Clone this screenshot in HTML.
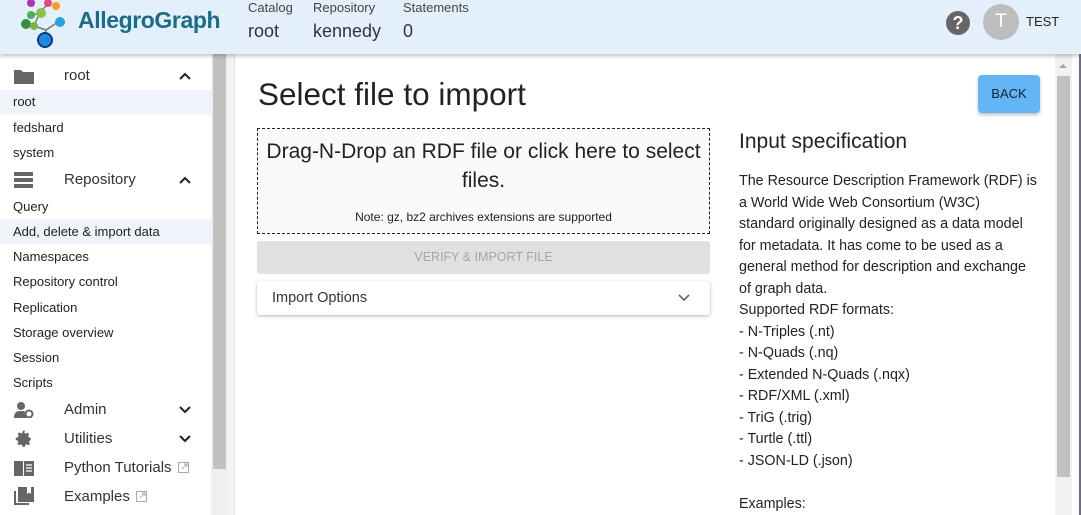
<!DOCTYPE html>
<html><head><meta charset="utf-8"><style>
*{box-sizing:border-box;margin:0;padding:0}
body{width:1081px;height:515px;overflow:hidden;font-family:"Liberation Sans",Roboto,sans-serif;background:#fff;position:relative;color:#222}
.hdr{position:absolute;left:0;top:0;width:1081px;height:54px;background:#e3f0fb;box-shadow:0 2px 4px rgba(0,0,0,.25);z-index:5}
.logo{position:absolute;left:78px;top:7px;font-size:23px;font-weight:bold;color:#1b6c86;letter-spacing:-.4px}
.hk{position:absolute;top:0;font-size:13px;color:#444}
.hv{position:absolute;top:21px;font-size:18px;color:#333}
.side{position:absolute;left:0;top:54px;width:211px;height:461px;background:#fff}
.it{position:absolute;left:13px;font-size:13px;color:#222}
.hi{position:absolute;left:0;width:211px;height:25px;background:#eef4fa}
.sec{position:absolute;left:64px;font-size:15px;color:#333}
.ic{position:absolute;left:14px}
.car{position:absolute;left:179px}
.sb{position:absolute;left:211px;top:54px;width:17px;height:461px;background:#efefef}
.sbt{position:absolute;left:213px;top:54px;width:13px;height:415px;background:#c1c1c1}
.bd{position:absolute;left:228px;top:54px;width:7px;height:461px;background:#f4f4f4;border-right:1px solid #e2e2e2}
h1{position:absolute;left:258px;top:76px;font-size:31.5px;font-weight:normal;color:#222}
.back{position:absolute;left:978px;top:75px;width:62px;height:38px;background:#64b5f6;border-radius:4px;box-shadow:0 2px 3px rgba(0,0,0,.25);font-size:13px;color:#123;text-align:center;line-height:38px}
.drop{position:absolute;left:257px;top:128px;width:453px;height:106px;border:1px dashed #222;background:#fafafa;text-align:center}
.vbtn{position:absolute;left:257px;top:241px;width:453px;height:33px;background:#e0e0e0;border-radius:3px;color:#a6a6a6;font-size:12.5px;text-align:center;line-height:33px}
.opt{position:absolute;left:257px;top:281px;width:453px;height:34px;background:#fff;box-shadow:0 1px 3px rgba(0,0,0,.3);border-radius:3px;font-size:14.5px;color:#333;padding:9px 15px}
.spec{position:absolute;left:739px;top:130px;width:315px}
.spec h2{font-size:21px;font-weight:normal;color:#222;margin-bottom:17px}
.spec p{font-size:14.3px;line-height:21.5px;color:#222;white-space:nowrap}
.rs{position:absolute;left:1055px;top:54px;width:17px;height:461px;background:#f1f1f1}
.rst{position:absolute;left:1057px;top:76px;width:13px;height:401px;background:#c1c1c1}
</style></head><body>
<div class="hdr">
<svg style="position:absolute;left:18px;top:0" width="60" height="50" viewBox="0 0 60 50">
<path d="M10 18 L22 12 L30 4 M22 12 L16 26 L8 26 M16 26 L28 30 L40 22 M28 30 L26 40" stroke="#777" stroke-width="1.5" fill="none"/>
<circle cx="13" cy="3" r="4" fill="#a23ab0"/><circle cx="30" cy="3" r="4" fill="#e24a78"/><circle cx="38" cy="6" r="4" fill="#f6a01a"/>
<circle cx="23" cy="13" r="5" fill="#8bc34a"/><circle cx="13" cy="15" r="4" fill="#4caf50"/><circle cx="8" cy="24" r="5" fill="#388e3c"/>
<circle cx="16" cy="26" r="4" fill="#7cb342"/><circle cx="42" cy="22" r="5" fill="#29a0d8"/><circle cx="27" cy="40" r="7" fill="#1e88e5" stroke="#0d3c78" stroke-width="2"/>
</svg>
<div class="logo">AllegroGraph</div>
<div class="hk" style="left:248px">Catalog</div><div class="hv" style="left:248px">root</div>
<div class="hk" style="left:313px">Repository</div><div class="hv" style="left:313px">kennedy</div>
<div class="hk" style="left:403px">Statements</div><div class="hv" style="left:403px">0</div>
<div style="position:absolute;left:946px;top:11px;width:24px;height:24px;border-radius:50%;background:#666;color:#fff;font-weight:bold;font-size:18px;text-align:center;line-height:24px">?</div>
<div style="position:absolute;left:983px;top:4px;width:36px;height:36px;border-radius:50%;background:#bdbdbd;color:#fff;font-size:19px;text-align:center;line-height:36px">T</div>
<div style="position:absolute;left:1026px;top:14px;font-size:13px;color:#222">TEST</div>
</div>
<div class="side">
<div class="hi" style="top:36px"></div><div class="hi" style="top:165px"></div>
<svg class="ic" style="top:14px" width="20" height="16"><path d="M0 2h7l2 2h11v12H0z" fill="#666"/></svg>
<div class="sec" style="top:13px">root</div><svg class="car" style="top:18px" width="12" height="8"><path d="M1 7l5-5 5 5" stroke="#222" stroke-width="2" fill="none"/></svg>
<div class="it" style="top:40px">root</div>
<div class="it" style="top:66px">fedshard</div>
<div class="it" style="top:91px">system</div>
<svg class="ic" style="top:118px" width="20" height="16"><rect y="0" width="19" height="4" fill="#666"/><rect y="6" width="19" height="4" fill="#666"/><rect y="12" width="19" height="4" fill="#666"/></svg>
<div class="sec" style="top:117px">Repository</div><svg class="car" style="top:122px" width="12" height="8"><path d="M1 7l5-5 5 5" stroke="#222" stroke-width="2" fill="none"/></svg>
<div class="it" style="top:145px">Query</div>
<div class="it" style="top:170px">Add, delete &amp; import data</div>
<div class="it" style="top:195px">Namespaces</div>
<div class="it" style="top:220px">Repository control</div>
<div class="it" style="top:246px">Replication</div>
<div class="it" style="top:271px">Storage overview</div>
<div class="it" style="top:296px">Session</div>
<div class="it" style="top:321px">Scripts</div>
<svg class="ic" style="top:348px" width="20" height="16"><circle cx="7" cy="4" r="4" fill="#666"/><path d="M0 16c0-6 3-7 7-7s5 1 5 2v5z" fill="#666"/><circle cx="15" cy="12" r="3.5" fill="none" stroke="#666" stroke-width="2"/></svg>
<div class="sec" style="top:347px">Admin</div><svg class="car" style="top:352px" width="12" height="8"><path d="M1 1l5 5 5-5" stroke="#222" stroke-width="2" fill="none"/></svg>
<svg class="ic" style="top:376px" width="20" height="18" viewBox="0 0 24 24"><path d="M12 8a4 4 0 100 8 4 4 0 000-8zm9 5.5v-3l-2.5-.5-1-2.3 1.4-2.1-2.1-2.1-2.1 1.4-2.3-1L13.5 1h-3l-.5 2.5-2.3 1-2.1-1.4-2.1 2.1 1.4 2.1-1 2.3L1 10.5v3l2.5.5 1 2.3-1.4 2.1 2.1 2.1 2.1-1.4 2.3 1 .5 2.4h3l.5-2.5 2.3-1 2.1 1.4 2.1-2.1-1.4-2.1 1-2.3z" fill="#666"/></svg>
<div class="sec" style="top:376px">Utilities</div><svg class="car" style="top:381px" width="12" height="8"><path d="M1 1l5 5 5-5" stroke="#222" stroke-width="2" fill="none"/></svg>
<svg class="ic" style="top:406px" width="20" height="16"><path d="M0 1h9v15H0zM10 1h10v15H10z" fill="#666"/><path d="M12 5h6M12 8h6M12 11h6" stroke="#fff" stroke-width="1.2"/></svg>
<div class="sec" style="top:405px">Python Tutorials</div>
<svg style="position:absolute;left:178px;top:408px" width="11" height="11"><rect x=".5" y=".5" width="10" height="10" fill="none" stroke="#aaa"/><path d="M4 7l5-5M6 2h3v3" stroke="#aaa" fill="none"/></svg>
<svg class="ic" style="top:433px" width="20" height="18"><path d="M0 4h2v12h13v2H0z" fill="#666"/><rect x="4" y="0" width="16" height="15" fill="#666"/><path d="M13 0h4v7l-2-1.5L13 7z" fill="#fff"/></svg>
<div class="sec" style="top:434px">Examples</div>
<svg style="position:absolute;left:136px;top:437px" width="11" height="11"><rect x=".5" y=".5" width="10" height="10" fill="none" stroke="#aaa"/><path d="M4 7l5-5M6 2h3v3" stroke="#aaa" fill="none"/></svg>
</div>
<div class="sb"></div><div class="sbt"></div><div class="bd"></div>
<h1>Select file to import</h1>
<div class="back">BACK</div>
<div class="drop"><div style="font-size:21px;line-height:29px;margin-top:8px;color:#222">Drag-N-Drop an RDF file or click here to select<br>files.</div><div style="font-size:12px;margin-top:15px;color:#222">Note: gz, bz2 archives extensions are supported</div></div>
<div class="vbtn">VERIFY &amp; IMPORT FILE</div>
<div class="opt">Import Options<svg style="position:absolute;right:20px;top:13px" width="12" height="8"><path d="M1 1l5 5 5-5" stroke="#666" stroke-width="1.6" fill="none"/></svg></div>
<div class="spec"><h2>Input specification</h2><p>The Resource Description Framework (RDF) is<br>a World Wide Web Consortium (W3C)<br>standard originally designed as a data model<br>for metadata. It has come to be used as a<br>general method for description and exchange<br>of graph data.<br>Supported RDF formats:<br>- N-Triples (.nt)<br>- N-Quads (.nq)<br>- Extended N-Quads (.nqx)<br>- RDF/XML (.xml)<br>- TriG (.trig)<br>- Turtle (.ttl)<br>- JSON-LD (.json)<br><br>Examples:</p></div>
<div class="rs"></div><div class="rst"></div>
<div style="position:absolute;left:1059px;top:64px;width:0;height:0;border:4px solid transparent;border-bottom-color:#a3a3a3;border-top:0"></div>
<div style="position:absolute;left:1079px;top:54px;width:2px;height:461px;background:#6b7080"></div>
</body></html>
